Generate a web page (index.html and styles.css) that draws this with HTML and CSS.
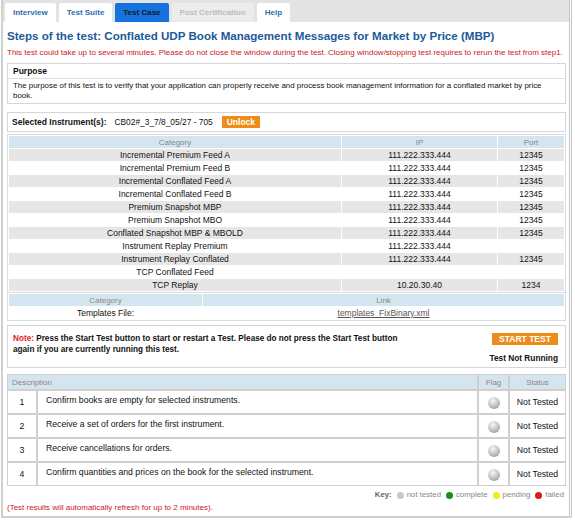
FILE: index.html
```html
<!DOCTYPE html>
<html lang="en">
<head>
    <meta charset="UTF-8">
    <title>Test Case</title>
    <link rel="stylesheet" href="styles.css">
</head>
<body>
    <div class="frame">
        <div class="tabs">
            <a class="tab">Interview</a>
            <a class="tab">Test Suite</a>
            <a class="tab active">Test Case</a>
            <a class="tab disabled">Post Certification</a>
            <a class="tab">Help</a>
        </div>
        <div class="content">
            <h1 class="title">Steps of the test: Conflated UDP Book Management Messages for Market by Price (MBP)</h1>
            <p class="warn">This test could take up to several minutes. Please do not close the window during the test. Closing window/stopping test requires to rerun the test from step1.</p>

            <div class="box purpose">
                <div class="box-head">Purpose</div>
                <div class="box-body">The purpose of this test is to verify that your application can properly receive and process book management information for a conflated market by price book.</div>
            </div>

            <div class="box instrument">
                <span class="label">Selected Instrument(s):</span>
                <span class="symbol">CB02#_3_7/8_05/27 - 705</span>
                <button class="btn-unlock">Unlock</button>
            </div>

            <table class="feeds">
                <tr><th class="c-cat">Category</th><th class="c-ip">IP</th><th class="c-port">Port</th></tr>
                <tr><td>Incremental Premium Feed A</td><td>111.222.333.444</td><td>12345</td></tr>
                <tr><td>Incremental Premium Feed B</td><td>111.222.333.444</td><td>12345</td></tr>
                <tr><td>Incremental Conflated Feed A</td><td>111.222.333.444</td><td>12345</td></tr>
                <tr><td>Incremental Conflated Feed B</td><td>111.222.333.444</td><td>12345</td></tr>
                <tr><td>Premium Snapshot MBP</td><td>111.222.333.444</td><td>12345</td></tr>
                <tr><td>Premium Snapshot MBO</td><td>111.222.333.444</td><td>12345</td></tr>
                <tr><td>Conflated Snapshot MBP &amp; MBOLD</td><td>111.222.333.444</td><td>12345</td></tr>
                <tr><td>Instrument Replay Premium</td><td>111.222.333.444</td><td></td></tr>
                <tr><td>Instrument Replay Conflated</td><td>111.222.333.444</td><td>12345</td></tr>
                <tr><td>TCP Conflated Feed</td><td></td><td></td></tr>
                <tr><td>TCP Replay</td><td>10.20.30.40</td><td>1234</td></tr>
            </table>

            <table class="links">
                <tr><th class="c-lcat">Category</th><th>Link</th></tr>
                <tr><td>Templates File:</td><td><a class="file-link">templates_FixBinary.xml</a></td></tr>
            </table>

            <div class="box note">
                <p class="note-text"><span class="note-label">Note:</span> Press the Start Test button to start or restart a Test. Please do not press the Start Test button again if you are currently running this test.</p>
                <div class="note-side">
                    <button class="btn-start">START TEST</button>
                    <span class="run-state">Test Not Running</span>
                </div>
            </div>

            <table class="steps">
                <tr><th class="desc-head" colspan="2">Description</th><th class="c-flag">Flag</th><th class="c-status">Status</th></tr>
                <tr><td class="num">1</td><td class="desc">Confirm books are empty for selected instruments.</td><td class="flag"><span class="dot grey"></span></td><td class="status">Not Tested</td></tr>
                <tr><td class="num">2</td><td class="desc">Receive a set of orders for the first instrument.</td><td class="flag"><span class="dot grey"></span></td><td class="status">Not Tested</td></tr>
                <tr><td class="num">3</td><td class="desc">Receive cancellations for orders.</td><td class="flag"><span class="dot grey"></span></td><td class="status">Not Tested</td></tr>
                <tr><td class="num">4</td><td class="desc">Confirm quantities and prices on the book for the selected instrument.</td><td class="flag"><span class="dot grey"></span></td><td class="status">Not Tested</td></tr>
            </table>

            <div class="key">
                <b>Key:</b>
                <span class="key-item"><span class="mini grey"></span>not tested</span>
                <span class="key-item"><span class="mini green"></span>complete</span>
                <span class="key-item"><span class="mini yellow"></span>pending</span>
                <span class="key-item"><span class="mini red"></span>failed</span>
            </div>
            <p class="refresh">(Test results will automatically refresh for up to 2 minutes).</p>
        </div>
    </div>
</body>
</html>
```

FILE: styles.css
```css
body {
    margin: 0;
    font-family: Arial, "Liberation Sans", sans-serif;
    font-size: 8.5px;
    color: #111;
    background: #fff;
}
.frame {
    width: 566px;
    height: 516px;
    margin: 0 0 0 1px;
    border: 2px solid #cfcfcf;
    border-top: none;
    border-right: 3px double #c4c4c4;
    overflow: hidden;
}
.tabs {
    display: flex;
    gap: 3px;
    padding: 3px 2px 0;
    height: 19px;
    background: #e3e3e3;
}
.tab {
    display: flex;
    align-items: center;
    justify-content: center;
    height: 19px;
    padding: 0 8px;
    background: #fff;
    color: #2d6db4;
    font-weight: bold;
    font-size: 8px;
    border-radius: 2px 2px 0 0;
}
.tab.active {
    background: #1672dc;
    color: #0d1a2b;
}
.tab.disabled {
    background: #ececec;
    color: #bcbcbc;
}
.content {
    padding: 0 3px 0 4px;
}
.title {
    margin: 7px 0 0;
    font-size: 11.6px;
    line-height: 13px;
    color: #1d5a9b;
}
.warn {
    margin: 6px 0 5px;
    font-size: 8px;
    line-height: 10px;
    color: #cc2020;
}
.box {
    border: 1px solid #d6d6d6;
    margin-bottom: 8px;
}
.box-head {
    padding: 2px 5px 2px;
    font-weight: bold;
    font-size: 8.5px;
    line-height: 10px;
    border-bottom: 1px solid #dedede;
}
.box-body {
    padding: 2px 5px 2px;
    font-size: 7.9px;
    line-height: 10px;
}
.instrument {
    display: flex;
    align-items: center;
    height: 18px;
    padding: 0 4px;
    margin-bottom: 2px;
}
.label {
    font-weight: bold;
}
.symbol {
    margin-left: 8px;
    font-size: 8.4px;
}
.btn-unlock {
    margin-left: 9px;
    padding: 0 5px;
    height: 12px;
    border: none;
    background: #ee8c1a;
    color: #fff;
    font: bold 8.5px Arial, "Liberation Sans", sans-serif;
}
table {
    width: 100%;
    border-collapse: separate;
    border-spacing: 1px;
    border: 1px solid #dcdcdc;
    text-align: center;
}
th {
    background: #d5e5f0;
    color: #888;
    font-weight: normal;
    font-size: 8px;
    height: 12px;
    padding: 0;
}
td {
    height: 12px;
    padding: 0;
    font-size: 8.5px;
    line-height: 10px;
}
.feeds tr:nth-child(even) td {
    background: #e6e6e6;
}
.c-ip {
    width: 155px;
}
.c-port {
    width: 66px;
}
.links {
    border-top: none;
    margin-bottom: 4px;
}
.c-lcat {
    width: 193px;
}
.file-link {
    color: #555;
    text-decoration: underline;
}
.note {
    display: flex;
    justify-content: space-between;
    padding: 7px 7px 4px 5px;
    margin-bottom: 6px;
}
.note-text {
    margin: 0;
    width: 390px;
    font-size: 8.2px;
    font-weight: bold;
    line-height: 11px;
}
.note-label {
    color: #e21c1c;
}
.note-side {
    display: flex;
    flex-direction: column;
    align-items: flex-end;
}
.btn-start {
    width: 66px;
    height: 12px;
    padding: 0;
    border: none;
    background: #ee8c1a;
    color: #fff;
    font: bold 8.5px Arial, "Liberation Sans", sans-serif;
}
.run-state {
    margin-top: 8px;
    font-weight: bold;
    font-size: 8.3px;
    line-height: 10px;
}
.steps {
    border: 1px solid #cfcfcf;
    border-spacing: 0;
}
.steps th {
    height: 14px;
    border-right: 2px solid #cfcfcf;
    border-bottom: 2px solid #cfcfcf;
}
.steps th:last-child {
    border-right: none;
}
.desc-head {
    text-align: left;
    padding-left: 4px !important;
}
.c-flag {
    width: 29px;
}
.c-status {
    width: 55px;
}
.steps td {
    height: 22px;
    border-right: 2px solid #cfcfcf;
    border-bottom: 2px solid #cfcfcf;
    font-size: 8.7px;
}
.steps tr:last-child td {
    border-bottom: none;
}
.steps td:last-child {
    border-right: none;
}
.num {
    width: 28px;
}
.desc {
    text-align: left;
    padding-left: 8px !important;
    vertical-align: top;
    padding-top: 4px !important;
    height: 18px !important;
}
.dot {
    display: inline-block;
    width: 12px;
    height: 12px;
    margin-top: 4px;
    border-radius: 50%;
    background: radial-gradient(circle at 40% 30%, #f8f8f8 0%, #c4c4c4 50%, #8a8a8a 100%);
}
.key {
    display: flex;
    justify-content: flex-end;
    align-items: center;
    gap: 5px;
    margin-top: 4px;
    padding-right: 2px;
    font-size: 7.8px;
    line-height: 10px;
    color: #888;
}
.key b {
    color: #666;
}
.key-item {
    display: flex;
    align-items: center;
    gap: 3px;
}
.mini {
    display: inline-block;
    width: 7px;
    height: 7px;
    border-radius: 50%;
}
.mini.grey { background: #c8c8c8; }
.mini.green { background: #1a8f1a; }
.mini.yellow { background: #f2ec1a; }
.mini.red { background: #e01818; }
.refresh {
    margin: 3px 0 0;
    font-size: 8px;
    line-height: 10px;
    color: #cc2020;
}
```
